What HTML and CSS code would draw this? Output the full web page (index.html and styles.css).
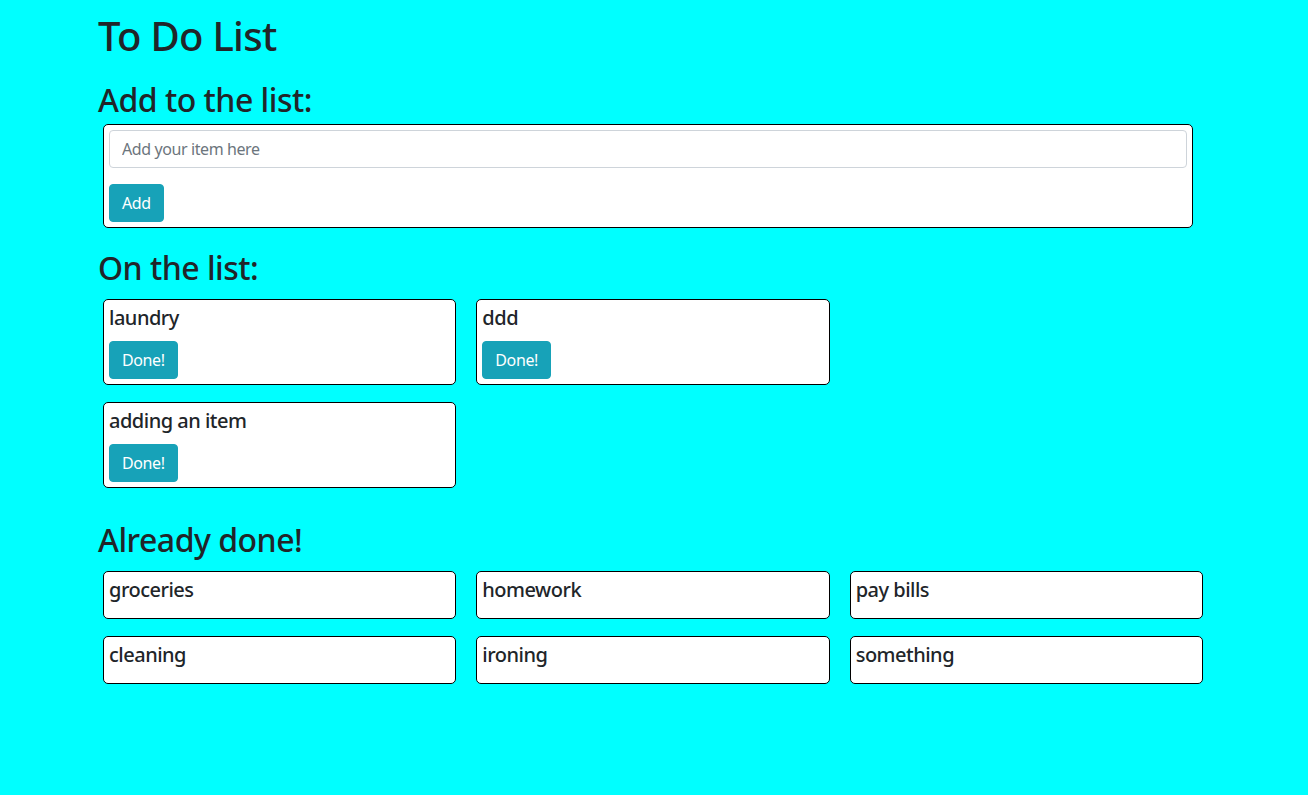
FILE: index.html
```html
<!DOCTYPE html>
<html lang="en">
<head>
<meta charset="utf-8">
<title>To Do List</title>
<link rel="stylesheet" href="styles.css">
</head>
<body>
<div class="container">
  <h1 class="title">To Do List</h1>
  <h2 class="section-title section-title--first">Add to the list:</h2>
  <form class="add-box">
    <input class="add-input" type="text" placeholder="Add your item here">
    <button class="btn" type="button">Add</button>
  </form>

  <h2 class="section-title">On the list:</h2>
  <div class="card-grid card-grid--todo">
    <div class="card">
      <p class="card-text">laundry</p>
      <button class="btn" type="button">Done!</button>
    </div>
    <div class="card">
      <p class="card-text">ddd</p>
      <button class="btn" type="button">Done!</button>
    </div>
    <div class="card">
      <p class="card-text">adding an item</p>
      <button class="btn" type="button">Done!</button>
    </div>
  </div>

  <h2 class="section-title section-title--done">Already done!</h2>
  <div class="card-grid card-grid--done">
    <div class="card"><p class="card-text">groceries</p></div>
    <div class="card"><p class="card-text">homework</p></div>
    <div class="card"><p class="card-text">pay bills</p></div>
    <div class="card"><p class="card-text">cleaning</p></div>
    <div class="card"><p class="card-text">ironing</p></div>
    <div class="card"><p class="card-text">something</p></div>
  </div>
</div>
</body>
</html>
```

FILE: styles.css
```css
* {
  box-sizing: border-box;
}

html, body {
  margin: 0;
  padding: 0;
}

body {
  background: #00ffff;
  color: #212529;
  font-family: "Noto Sans", "Open Sans", sans-serif;
  font-size: 16px;
  line-height: 1.5;
}

.container {
  width: 1112px;
  margin: 0 auto;
  padding-bottom: 40px;
}

.title {
  font-size: 40px;
  line-height: 48px;
  font-weight: 500;
  letter-spacing: -0.7px;
  margin: 12px 0 21px;
}

.section-title {
  font-size: 32px;
  line-height: 38px;
  font-weight: 500;
  letter-spacing: -0.5px;
  margin: 21px 0 12px;
}

.section-title--first {
  margin-top: 0;
  margin-bottom: 5px;
}

.section-title--done {
  margin-top: 33px;
  margin-bottom: 12px;
}

.add-box {
  width: 1090px;
  margin: 0 0 0 5px;
  background: #fff;
  border: 1px solid #000;
  border-radius: 5px;
  padding: 5px;
  display: flex;
  flex-direction: column;
  align-items: flex-start;
  gap: 16px;
}

.add-input {
  width: 100%;
  height: 38px;
  padding: 6px 12px;
  font-family: inherit;
  font-size: 16px;
  line-height: 24px;
  letter-spacing: -0.4px;
  color: #495057;
  background: #fff;
  border: 1px solid #ced4da;
  border-radius: 4px;
  outline: none;
}

.add-input::placeholder {
  color: #6c757d;
}

.btn {
  display: inline-block;
  height: 38px;
  padding: 6px 12px;
  font-family: inherit;
  font-size: 16px;
  line-height: 24px;
  letter-spacing: -0.4px;
  color: #fff;
  background: #17a2b8;
  border: 1px solid #17a2b8;
  border-radius: 4px;
  cursor: pointer;
}

.card-grid {
  display: grid;
  grid-template-columns: repeat(3, 353.33px);
  column-gap: 20px;
  row-gap: 17px;
  margin-left: 5px;
}

.card-grid--todo {
  grid-template-columns: repeat(2, 353.33px);
}

.card {
  background: #fff;
  border: 1px solid #000;
  border-radius: 5px;
  padding: 5px;
  display: flex;
  flex-direction: column;
  align-items: flex-start;
}

.card-text {
  margin: 0 0 11px;
  padding-top: 1px;
  font-size: 20px;
  line-height: 24px;
  font-weight: 500;
  letter-spacing: -0.5px;
}
```
